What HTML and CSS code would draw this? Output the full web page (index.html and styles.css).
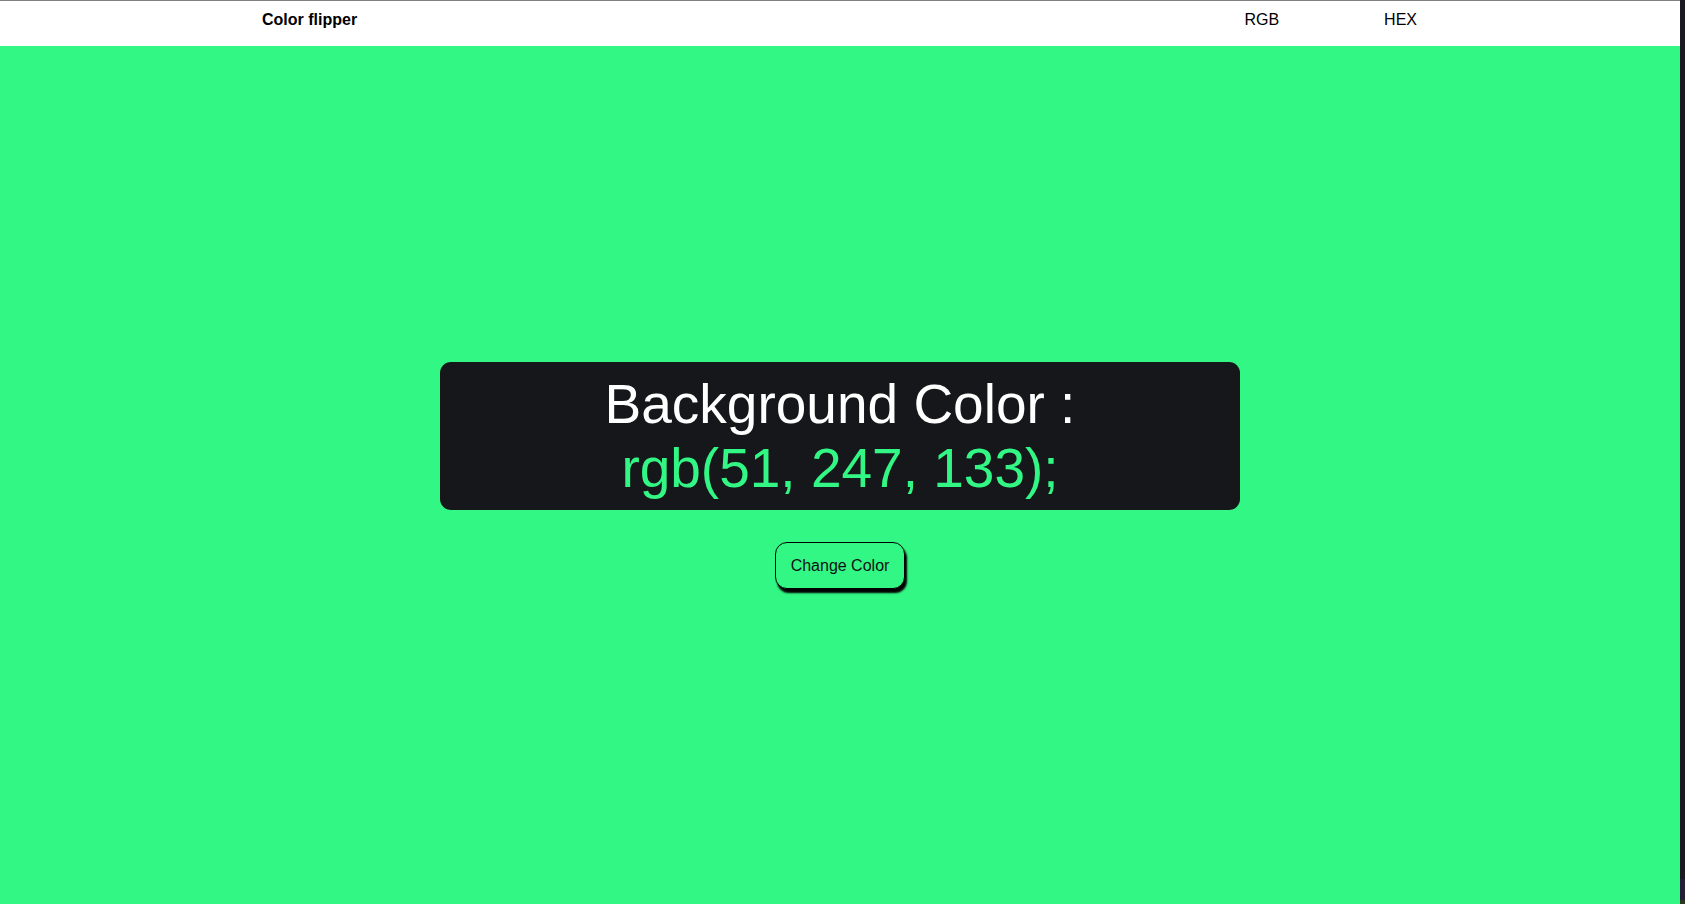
FILE: index.html
```html
<!DOCTYPE html>
<html lang="en">
<head>
<meta charset="utf-8">
<title>Color flipper</title>
<link rel="stylesheet" href="styles.css">
</head>
<body>
<div class="page">
  <header class="topbar">
    <div class="brand">Color flipper</div>
    <nav class="links">
      <a class="link" href="#">RGB</a>
      <a class="link" href="#">HEX</a>
    </nav>
  </header>
  <main class="main">
    <div class="panel">
      <h2 class="title">Background Color :<br><span class="value">rgb(51, 247, 133);</span></h2>
    </div>
    <button class="btn">Change Color</button>
  </main>
</div>
<div class="edge"></div>
</body>
</html>
```

FILE: styles.css
```css
* { box-sizing: border-box; }
html, body { height: 100%; }
body {
  margin: 0;
  display: flex;
  font-family: "Liberation Sans", Arial, sans-serif;
  background: #33f785;
  overflow: hidden;
}
.page {
  flex: 1;
  display: flex;
  flex-direction: column;
  min-width: 0;
}
.edge {
  width: 5px;
  flex: none;
  background: linear-gradient(to bottom, #1b1a22 0, #1b1a22 879px, #241f36 879px, #241f36 900px, #2a3a22 900px);
}
.topbar {
  height: 46px;
  flex: none;
  background: #fff;
  border-top: 1px solid #808080;
  display: flex;
  align-items: center;
  justify-content: space-between;
  padding: 0 268px 0 262px;
  margin-right: -5px;
}
.brand {
  font-weight: bold;
  font-size: 16px;
  color: #000;
  margin-top: -8px;
}
.links {
  display: flex;
  gap: 105px;
  margin-top: -8px;
}
.link {
  font-size: 16px;
  color: #000;
  text-decoration: none;
}
.main {
  flex: 1;
  display: flex;
  flex-direction: column;
  align-items: center;
  justify-content: center;
  gap: 32px;
}
.panel {
  width: 800px;
  background: #16171b;
  border-radius: 11px;
  padding: 10px 0;
  text-align: center;
}
.title {
  margin: 0;
  font-weight: normal;
  font-size: 55px;
  line-height: normal;
  color: #fff;
}
.value { color: #33f785; }
.btn {
  font-family: "Liberation Sans", Arial, sans-serif;
  font-size: 16px;
  line-height: 19px;
  padding: 13px 15px;
  border: 1px solid #000;
  border-radius: 12px;
  background: #33f785;
  color: #111;
  box-shadow: 2px 4px 2px #000;
  cursor: pointer;
}
```
